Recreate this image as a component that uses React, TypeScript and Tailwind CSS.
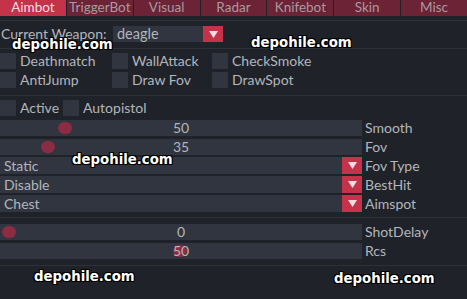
import React from 'react'

const TABS = ['Aimbot', 'TriggerBot', 'Visual', 'Radar', 'Knifebot', 'Skin', 'Misc']

const font = "font-['Lato','Open_Sans',sans-serif]"

export default function App() {
  return (
    <div className={`relative w-[467px] h-[299px] overflow-hidden bg-[#1f2228] text-[14px] leading-none text-[#b3b6bc] ${font}`}>
      {/* tabs */}
      <div className="grid grid-cols-7 gap-px h-4 text-[13.5px]">
        {TABS.map((t, i) => (
          <div
            key={t}
            className={`flex items-center justify-center ${i === 0 ? 'bg-[#c5334b] text-[#f3dde1]' : 'bg-[#6b2335] text-[#a99aa0]'}`}
          >
            {t}
          </div>
        ))}
      </div>

      <div className="h-1" />
      <Line />

      {/* weapon */}
      <div className="pt-[5px] pb-[6px]">
        <div className="flex h-4 items-center">
          <div className="w-[113px] pl-px">Current Weapon:</div>
          <div className="flex h-4 w-[110px] bg-[#30353f]">
            <div className="flex-1 flex items-center pl-1 text-[14.5px]">deagle</div>
            <Arrow />
          </div>
        </div>
      </div>
      <Line />

      {/* checks */}
      <div className="pt-1 pb-[7px] flex flex-col gap-[3px]">
        <div className="flex h-4">
          <Check label="Deathmatch" w="w-[112px]" />
          <Check label="WallAttack" w="w-[100px]" />
          <Check label="CheckSmoke" w="w-[100px]" />
        </div>
        <div className="flex h-4">
          <Check label="AntiJump" w="w-[112px]" />
          <Check label="Draw Fov" w="w-[100px]" />
          <Check label="DrawSpot" w="w-[100px]" />
        </div>
      </div>
      <Line />

      <div className="pt-1 pb-[5px] flex flex-col">
        <div className="flex h-4">
          <Check label="Active" w="w-[63px]" />
          <Check label="Autopistol" w="w-[100px]" />
        </div>
        <div className="mt-1 flex flex-col gap-[3px]">
          <Slider value="50" label="Smooth" knob="left-[58px]" />
          <Slider value="35" label="Fov" knob="left-[41px]" />
        </div>
        <div className="mt-[2px] flex flex-col gap-[2px]">
          <Combo value="Static" label="Fov Type" />
          <Combo value="Disable" label="BestHit" />
          <Combo value="Chest" label="Aimspot" />
        </div>
      </div>
      <Line />

      <div className="pt-[6px] pb-[6px] flex flex-col gap-[3px]">
        <Slider value="0" label="ShotDelay" knob="left-[2px]" />
        <Slider value="50" label="Rcs" knob="left-[173px]" />
      </div>
      <Line />

      {/* watermarks */}
      <Mark className="left-[12px] top-[38px]" />
      <Mark className="left-[251px] top-[36px]" />
      <Mark className="left-[72px] top-[153px]" />
      <Mark className="left-[34px] top-[270px]" />
      <Mark className="left-[334px] top-[272px]" />
    </div>
  )
}

function Line() {
  return <div className="h-px bg-[#2d3138]" />
}

function Arrow() {
  return (
    <div className="flex w-5 items-center justify-center bg-[#c5334b]">
      <svg width="9" height="7" viewBox="0 0 9 7">
        <polygon points="0,0 9,0 4.5,7" fill="#f1dde1" />
      </svg>
    </div>
  )
}

function Check({ label, w }: { label: string; w: string }) {
  return (
    <div className={`flex items-center gap-[4px] ${w}`}>
      <div className="h-4 w-4 shrink-0 bg-[#30353f]" />
      <span className="whitespace-nowrap">{label}</span>
    </div>
  )
}

function Slider({ value, label, knob }: { value: string; label: string; knob: string }) {
  return (
    <div className="flex h-4 items-center">
      <div className="relative h-4 w-[362px] bg-[#30353f] flex items-center justify-center">
        <div className={`absolute top-[2px] h-3 w-[14px] rounded-full bg-[#8b2c42] ${knob}`} />
        <span className="relative">{value}</span>
      </div>
      <span className="pl-[3px]">{label}</span>
    </div>
  )
}

function Combo({ value, label }: { value: string; label: string }) {
  return (
    <div className="flex h-[17px] items-center">
      <div className="flex h-[17px] w-[362px] bg-[#30353f]">
        <div className="flex-1 flex items-center pl-1">{value}</div>
        <Arrow />
      </div>
      <span className="pl-[3px]">{label}</span>
    </div>
  )
}

function Mark({ className }: { className: string }) {
  return (
    <div
      className={`absolute font-['DejaVu_Sans',sans-serif] font-bold text-[13.3px] leading-none text-white [text-shadow:1px_1px_0_#000,-1px_-1px_0_#000,1px_-1px_0_#000,-1px_1px_0_#000,0_1px_0_#000,0_-1px_0_#000,1px_0_0_#000,-1px_0_0_#000] ${className}`}
    >
      depohile.com
    </div>
  )
}
